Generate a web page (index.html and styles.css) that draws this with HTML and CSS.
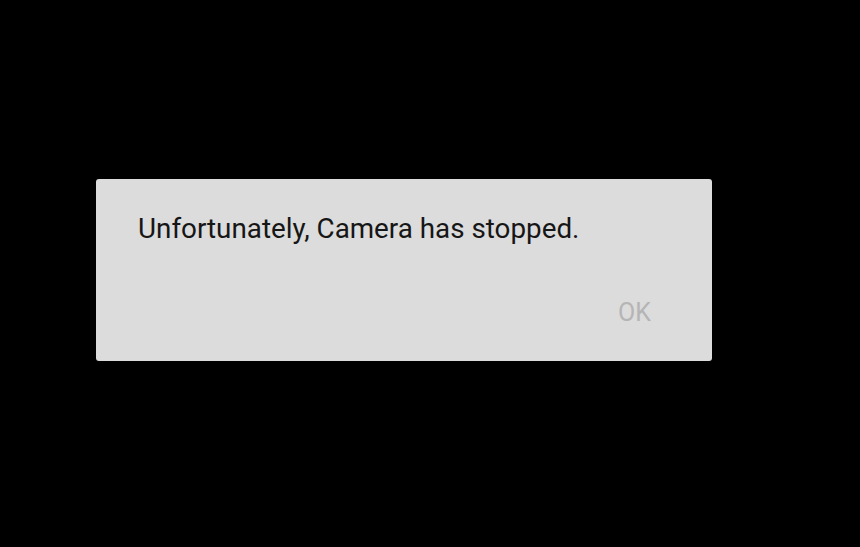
FILE: index.html
```html
<!DOCTYPE html>
<html lang="en">
  <head>
    <meta charset="UTF-8" />
    <title>Camera</title>
    <link rel="stylesheet" href="styles.css">
  </head>
  <body>
    <div class="dialog">
      <p class="message">Unfortunately, Camera has stopped.</p>
      <div class="actions">
        <button class="ok">OK</button>
      </div>
    </div>
  </body>
</html>
```

FILE: styles.css
```css
html,
body {
  margin: 0;
  height: 100%;
  background: #000;
}
body {
  padding-top: 179px;
  box-sizing: border-box;
  font-family: Roboto, "Noto Sans", sans-serif;
}
.dialog {
  margin-left: 96px;
  width: 616px;
  height: 182px;
  background: #dcdcdc;
  border-radius: 3px;
  box-sizing: border-box;
  padding: 33px 42px 0 42px;
  display: flex;
  flex-direction: column;
}
.message {
  margin: 0;
  font-size: 27.8px;
  line-height: 33px;
  color: #161616;
}
.actions {
  display: flex;
  justify-content: flex-end;
  margin-top: 53px;
}
.ok {
  border: none;
  background: none;
  padding: 0;
  margin-right: 19px;
  font-family: inherit;
  font-size: 25px;
  line-height: 29px;
  color: #b5b5b5;
}
```
